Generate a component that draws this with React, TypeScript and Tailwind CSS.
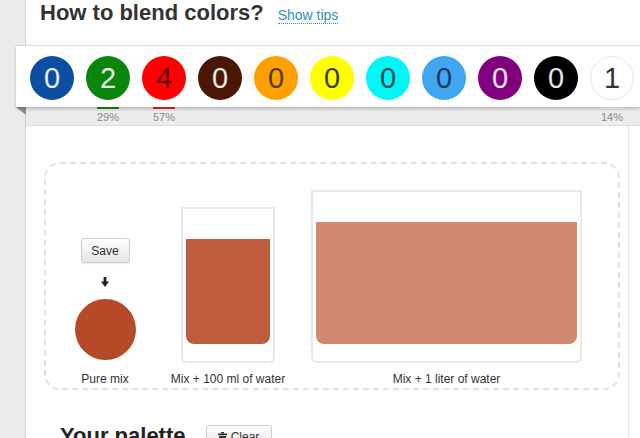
import React from 'react';

const font = { fontFamily: '"Liberation Sans", Arial, sans-serif' };

const colors = [
  { bg: 'bg-[#0b4ea2]', text: 'text-white/90', n: 0 },
  { bg: 'bg-[#0a860c]', text: 'text-white/90', n: 2 },
  { bg: 'bg-[#fe0000]', text: 'text-[#5e0b0b]', n: 4 },
  { bg: 'bg-[#4a1706]', text: 'text-white/90', n: 0 },
  { bg: 'bg-[#ffa000]', text: 'text-[#553a10]', n: 0 },
  { bg: 'bg-[#ffff00]', text: 'text-[#3d3d18]', n: 0 },
  { bg: 'bg-[#00f6f6]', text: 'text-[#0d4a55]', n: 0 },
  { bg: 'bg-[#40a6f2]', text: 'text-[#163a5c]', n: 0 },
  { bg: 'bg-[#800080]', text: 'text-white/90', n: 0 },
  { bg: 'bg-black', text: 'text-white/90', n: 0 },
  { bg: 'bg-white border border-[#e6e6e6]', text: 'text-[#333]', n: 1 },
];

const shares: Record<number, { pct: string; bar: string }> = {
  1: { pct: '29%', bar: 'bg-[#178a17]' },
  2: { pct: '57%', bar: 'bg-[#e3232a]' },
  10: { pct: '14%', bar: 'bg-[#fbfbfb]' },
};

const DownArrow = () => (
  <svg width="8" height="10" viewBox="0 0 8 10" className="block">
    <rect x="2.6" y="0" width="2.8" height="5" fill="#222" />
    <polygon points="0,4.5 8,4.5 4,10" fill="#222" />
  </svg>
);

const Trash = () => (
  <svg width="9" height="11" viewBox="0 0 9 11" className="block">
    <rect x="3" y="0" width="3" height="1.5" fill="#333" />
    <rect x="0" y="1.5" width="9" height="1.8" fill="#333" />
    <path d="M1 4h7l-0.6 7h-5.8z" fill="#333" />
  </svg>
);

const Glass = ({ w, h, liquidH, color }: { w: string; h: string; liquidH: string; color: string }) => (
  <div className={`${w} ${h} border-2 border-[#e8e8e8] rounded-b-[6px] px-[3px] pb-[17px] flex flex-col justify-end bg-white`}>
    <div className={`${liquidH} ${color} rounded-b-[8px]`} />
  </div>
);

export default function App() {
  return (
    <div className="w-[640px] h-[438px] overflow-hidden flex bg-white text-[#333]" style={font}>
      <div className="w-[26px] shrink-0 bg-[#ebebeb] border-r border-[#cfcfcf]" />
      <div className="flex-1 relative flex flex-col">
        <div className="h-[45px] pl-[14px] flex items-baseline gap-[14px] shrink-0">
          <h1 className="text-[22px] font-bold text-[#333] leading-[25px]">How to blend colors?</h1>
          <a className="text-[14px] text-[#2f8fc0] border-b border-dotted border-[#2f8fc0] leading-[16px]">Show tips</a>
        </div>

        <div className="-ml-[10px] h-[62px] bg-white border-t border-[#dcdcdc] shadow-[0_2px_3px_rgba(0,0,0,0.22)] pl-[14px] pt-[10px] flex gap-[12px] relative z-10 shrink-0">
          {colors.map((c, i) => (
            <div key={i} className={`w-[44px] h-[44px] rounded-full ${c.bg} ${c.text} flex items-center justify-center text-[29px] leading-none shrink-0`}>
              {c.n}
            </div>
          ))}
        </div>
        <div className="absolute left-[-10px] top-[107px] w-[10px] h-[8px] bg-[#8e8e8e] [clip-path:polygon(0_0,100%_0,100%_100%)]" />

        <div className="h-[19px] bg-[#ececec] border-b border-[#dedede] pl-[4px] flex gap-[12px] shrink-0">
          {colors.map((_, i) => (
            <div key={i} className="w-[44px] shrink-0 flex flex-col items-center">
              {shares[i] && (
                <>
                  <div className={`w-[22px] h-[2px] ${shares[i].bar}`} />
                  <span className="text-[11px] leading-[13px] mt-[2px] text-[#8a8a8a]">{shares[i].pct}</span>
                </>
              )}
            </div>
          ))}
        </div>

        <div className="w-[603px] flex-1 border-r border-[#e6e6e6] pt-[36px]">
          <div className="ml-[18px] w-[576px] h-[228px] border-2 border-dashed border-[#e2e2e2] rounded-[16px] flex items-end pb-[1px] text-[12px]">
            <div className="ml-[28px] w-[62px] flex flex-col items-center">
              <button className="w-[49px] h-[25px] rounded-[3px] border border-[#cdcdcd] bg-gradient-to-b from-white to-[#e4e4e4] text-[12px] text-[#333] shadow-[0_1px_1px_rgba(0,0,0,0.08)]">
                Save
              </button>
              <div className="mt-[14px]"><DownArrow /></div>
              <div className="mt-[12px] w-[61px] h-[61px] rounded-full bg-[#b64927]" />
              <span className="mt-[11px] leading-[16px] whitespace-nowrap">Pure mix</span>
            </div>

            <div className="ml-[45px] w-[94px] flex flex-col items-center">
              <Glass w="w-[94px]" h="h-[156px]" liquidH="h-[105px]" color="bg-[#be5e3f]" />
              <span className="mt-[8px] leading-[16px] whitespace-nowrap">Mix + 100 ml of water</span>
            </div>

            <div className="ml-[36px] w-[271px] flex flex-col items-center">
              <Glass w="w-[271px]" h="h-[173px]" liquidH="h-[122px]" color="bg-[#cf8a71]" />
              <span className="mt-[8px] leading-[16px] whitespace-nowrap">Mix + 1 liter of water</span>
            </div>
          </div>

          <div className="mt-[33px] pl-[34px] flex items-start gap-[20px]">
            <h2 className="text-[22px] font-bold leading-[25px] text-[#222]">Your palette</h2>
            <button className="mt-[2px] h-[24px] w-[66px] rounded-[3px] border border-[#cdcdcd] bg-gradient-to-b from-white to-[#e4e4e4] text-[12px] text-[#333] flex items-center justify-center gap-[4px]">
              <Trash />
              Clear
            </button>
          </div>
        </div>
      </div>
    </div>
  );
}
